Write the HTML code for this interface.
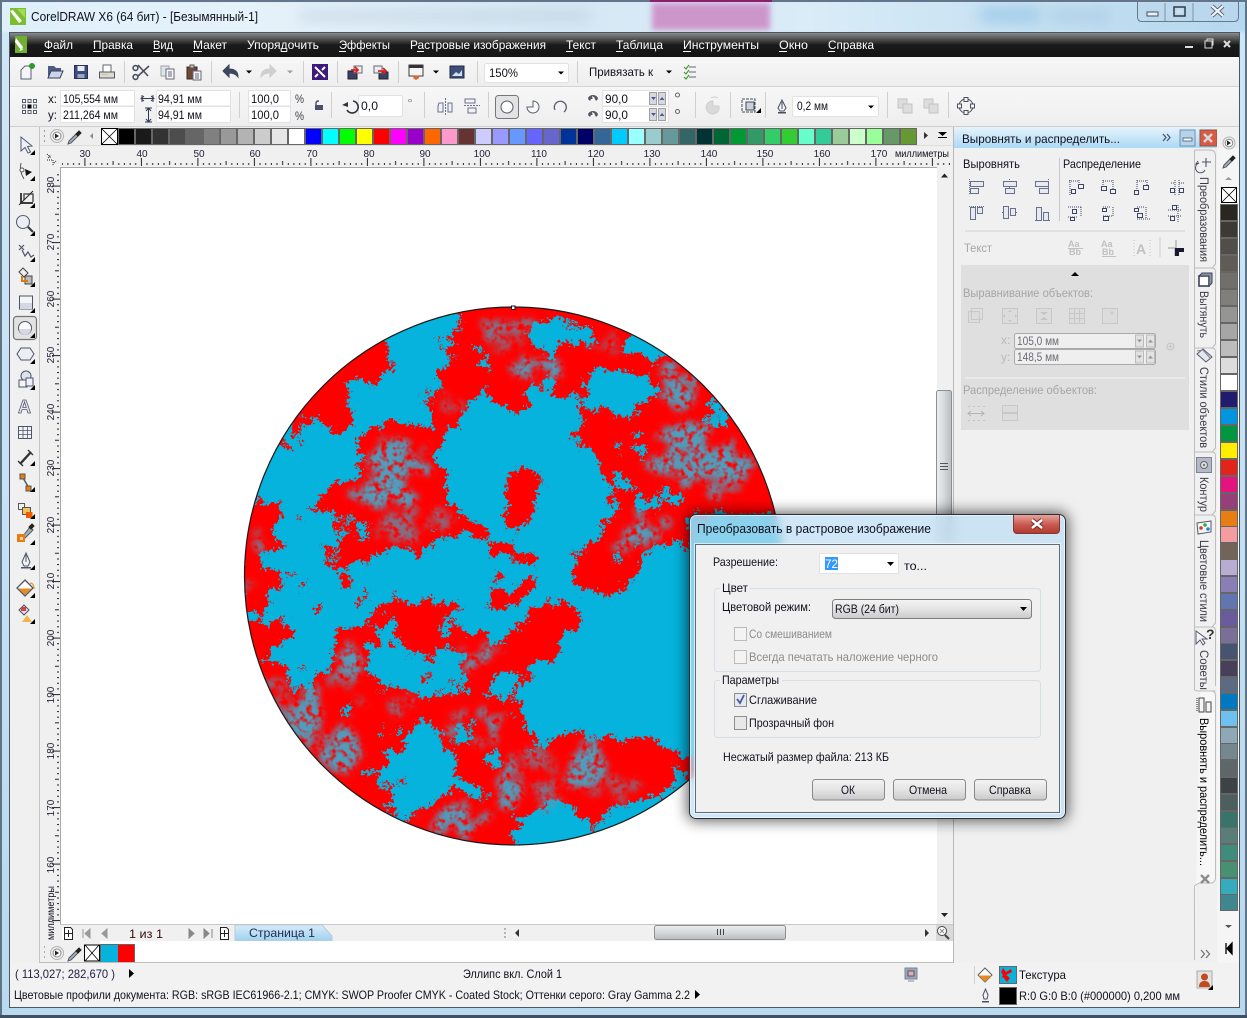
<!DOCTYPE html>
<html lang="ru"><head><meta charset="utf-8"><title>CorelDRAW X6</title>
<style>
html,body{margin:0;padding:0;background:#c5dff0}
body{position:relative;width:1247px;height:1018px;overflow:hidden;font-family:"Liberation Sans","Noto Sans CJK SC",sans-serif}
.a{position:absolute}
svg.l{position:absolute;left:0;top:0;width:1247px;height:1018px;overflow:hidden}
svg text{font-family:"Liberation Sans","Noto Sans CJK SC",sans-serif;font-size:12px;fill:#10101c}
svg .w{fill:#fff}
svg .g{fill:#a6a6a6}
svg .dg{fill:#8b8b8b}
svg .r{font-size:10px;text-anchor:middle;fill:#222238}
svg .tb{fill:#3c3c46}
</style></head><body>
<div class="a" style="left:0;top:0;width:1247px;height:1018px;background:linear-gradient(#cfe6f5,#c8e2f3 40%,#b9d9ee)"></div>
<div class="a" style="left:0;top:2px;width:1247px;height:30px;background:linear-gradient(90deg,#dff0fb,#e6f2fa 20%,#d6e8f5 45%,#d9ecf8 65%,#c3dff1 85%,#b5d8f0);filter:blur(1px)"></div>
<div class="a" style="left:300px;top:10px;width:290px;height:12px;background:#a9bccd;opacity:.32;filter:blur(6px)"></div>
<div class="a" style="left:652px;top:3px;width:118px;height:27px;background:#cd96cb;filter:blur(3px)"></div>
<div class="a" style="left:980px;top:8px;width:60px;height:14px;background:#8fc2e6;opacity:.7;filter:blur(7px)"></div>
<div class="a" style="left:1050px;top:10px;width:60px;height:12px;background:#a3c6de;opacity:.6;filter:blur(7px)"></div>
<div class="a" style="left:0;top:0;width:1247px;height:2px;background:#64748a"></div>
<div class="a" style="left:650px;top:0;width:122px;height:2px;background:#8c1f6b"></div>
<div class="a" style="left:0;top:0;width:2px;height:1018px;background:#5f7487"></div>
<div class="a" style="left:1245px;top:0;width:2px;height:1018px;background:#5f7487"></div>
<div class="a" style="left:0;top:1015px;width:1247px;height:3px;background:#3f5060"></div>
<div class="a" style="left:9px;top:32px;width:1231px;height:976px;background:#f0f0f0;border:1px solid #4a5866;box-sizing:border-box"></div>

<svg class="l" viewBox="0 0 1247 1018" xmlns="http://www.w3.org/2000/svg">
<defs>
<linearGradient id="gm" x1="0" y1="0" x2="0" y2="1"><stop offset="0" stop-color="#8a8a8a"/><stop offset=".5" stop-color="#1a1a1a"/><stop offset="1" stop-color="#151515"/></linearGradient>
<linearGradient id="gt" x1="0" y1="0" x2="0" y2="1"><stop offset="0" stop-color="#f7f7f7"/><stop offset="1" stop-color="#eeeeee"/></linearGradient>
<linearGradient id="gb" x1="0" y1="0" x2="0" y2="1"><stop offset="0" stop-color="#eceff1"/><stop offset=".5" stop-color="#d6d9db"/><stop offset="1" stop-color="#b9bcbe"/></linearGradient>
<linearGradient id="gh" x1="0" y1="0" x2="0" y2="1"><stop offset="0" stop-color="#e6f3fb"/><stop offset="1" stop-color="#acd9f5"/></linearGradient>
<linearGradient id="gv" x1="0" y1="0" x2="1" y2="0"><stop offset="0" stop-color="#eceff1"/><stop offset=".5" stop-color="#d6d9db"/><stop offset="1" stop-color="#b9bcbe"/></linearGradient>
<linearGradient id="gtab" x1="0" y1="0" x2="0" y2="1"><stop offset="0" stop-color="#d8ecfa"/><stop offset="1" stop-color="#9fd0f0"/></linearGradient>
<pattern id="hr" x="84.4" y="145" width="56.5" height="22" patternUnits="userSpaceOnUse">
<rect x="0" y="13" width="1" height="8" fill="#222"/><rect x="5.6" y="18" width="1" height="2" fill="#222"/><rect x="11.3" y="18" width="1" height="2" fill="#222"/><rect x="17" y="18" width="1" height="2" fill="#222"/><rect x="22.6" y="18" width="1" height="2" fill="#222"/><rect x="28.2" y="16" width="1" height="4" fill="#222"/><rect x="33.9" y="18" width="1" height="2" fill="#222"/><rect x="39.5" y="18" width="1" height="2" fill="#222"/><rect x="45.2" y="18" width="1" height="2" fill="#222"/><rect x="50.8" y="18" width="1" height="2" fill="#222"/></pattern>
<pattern id="vr" x="40" y="185.6" width="20" height="56.5" patternUnits="userSpaceOnUse">
<rect x="12" y="0" width="8" height="1" fill="#222"/><rect x="17" y="5.6" width="2" height="1" fill="#222"/><rect x="17" y="11.3" width="2" height="1" fill="#222"/><rect x="17" y="17" width="2" height="1" fill="#222"/><rect x="17" y="22.6" width="2" height="1" fill="#222"/><rect x="15" y="28.2" width="4" height="1" fill="#222"/><rect x="17" y="33.9" width="2" height="1" fill="#222"/><rect x="17" y="39.5" width="2" height="1" fill="#222"/><rect x="17" y="45.2" width="2" height="1" fill="#222"/><rect x="17" y="50.8" width="2" height="1" fill="#222"/></pattern>
<clipPath id="c"><circle cx="513.5" cy="576" r="269"/></clipPath>
<filter id="rough" x="-5%" y="-5%" width="110%" height="110%" color-interpolation-filters="sRGB">
<feTurbulence type="fractalNoise" baseFrequency=".07" numOctaves="3" seed="7" result="n"/>
<feColorMatrix in="n" type="matrix" values="1 0 0 0 0 0 1 0 0 0 0 0 1 0 0 0 0 0 0 1" result="n1"/>
<feDisplacementMap in="SourceGraphic" in2="n1" scale="24" xChannelSelector="R" yChannelSelector="G" result="d1"/>
<feTurbulence type="fractalNoise" baseFrequency=".28" numOctaves="2" seed="11" result="m"/>
<feColorMatrix in="m" type="matrix" values="1 0 0 0 0 0 1 0 0 0 0 0 1 0 0 0 0 0 0 1" result="m1"/>
<feDisplacementMap in="d1" in2="m1" scale="13" xChannelSelector="R" yChannelSelector="G"/>
</filter>
<filter id="mist" x="-5%" y="-5%" width="110%" height="110%" color-interpolation-filters="sRGB">
<feTurbulence type="fractalNoise" baseFrequency=".05" numOctaves="3" seed="21" result="w"/>
<feColorMatrix in="w" type="matrix" values="1 0 0 0 0 0 1 0 0 0 0 0 1 0 0 0 0 0 0 1" result="w1"/>
<feDisplacementMap in="SourceGraphic" in2="w1" scale="46" xChannelSelector="R" yChannelSelector="G" result="s"/>
<feGaussianBlur in="s" stdDeviation="3.500" result="b"/>
<feTurbulence type="fractalNoise" baseFrequency=".16" numOctaves="2" seed="3" result="t"/>
<feColorMatrix in="t" type="matrix" values="0 0 0 0 0 0 0 0 0 0 0 0 0 0 0 3.400 0 0 0 -.85" result="m"/>
<feComposite in="b" in2="m" operator="in"/></filter>
<path id="tri" d="M-3-1.5H3L0 1.5Z" fill="#000"/>
<path id="ct" d="M5 0V-5L0 0Z" fill="#000"/>
</defs>

<!-- menu -->
<rect x="10" y="33" width="1229" height="24" fill="url(#gm)"/>
<rect x="10" y="57" width="1229" height="29" fill="url(#gt)"/>
<rect x="10" y="86" width="1229" height="1" fill="#d4d4d4"/>
<rect x="10" y="87" width="1229" height="39" fill="url(#gt)"/>
<rect x="10" y="126" width="1229" height="1" fill="#cfcfcf"/>
<g>
<path d="M15 36h12v17H15z" fill="#6fae2e"/><path d="M16 38l7 9-2 3-6-8z" fill="#fff"/><path d="M19 51l4-1-1-3z" fill="#dfd"/>
</g>
<text class="w" x="44" y="49" textLength="29" lengthAdjust="spacingAndGlyphs">Файл</text>
<text class="w" x="93" y="49" textLength="40" lengthAdjust="spacingAndGlyphs">Правка</text>
<text class="w" x="153" y="49" textLength="20" lengthAdjust="spacingAndGlyphs">Вид</text>
<text class="w" x="193" y="49" textLength="34" lengthAdjust="spacingAndGlyphs">Макет</text>
<text class="w" x="247" y="49" textLength="72" lengthAdjust="spacingAndGlyphs">Упорядочить</text>
<text class="w" x="339" y="49" textLength="51" lengthAdjust="spacingAndGlyphs">Эффекты</text>
<text class="w" x="410" y="49" textLength="136" lengthAdjust="spacingAndGlyphs">Растровые изображения</text>
<text class="w" x="566" y="49" textLength="30" lengthAdjust="spacingAndGlyphs">Текст</text>
<text class="w" x="616" y="49" textLength="47" lengthAdjust="spacingAndGlyphs">Таблица</text>
<text class="w" x="683" y="49" textLength="76" lengthAdjust="spacingAndGlyphs">Инструменты</text>
<text class="w" x="779" y="49" textLength="29" lengthAdjust="spacingAndGlyphs">Окно</text>
<text class="w" x="828" y="49" textLength="46" lengthAdjust="spacingAndGlyphs">Справка</text>
<g fill="#fff"><rect x="44" y="51" width="8" height="1"/><rect x="93" y="51" width="8" height="1"/><rect x="153" y="51" width="7" height="1"/><rect x="193" y="51" width="9" height="1"/><rect x="281" y="51" width="6" height="1"/><rect x="339" y="51" width="7" height="1"/><rect x="417" y="51" width="7" height="1"/><rect x="566" y="51" width="7" height="1"/><rect x="616" y="51" width="7" height="1"/><rect x="683" y="51" width="8" height="1"/><rect x="779" y="51" width="8" height="1"/><rect x="828" y="51" width="7" height="1"/></g>
<g fill="#ddd"><rect x="1185" y="46" width="8" height="2"/><path d="M1205 41h7v7h-7zM1207 39h6v6h-1v-4h-5z" fill="none" stroke="#ddd"/><path d="M1224 41l6 6m0-6l-6 6" stroke="#ddd" stroke-width="2"/></g>
<!-- title -->
<rect x="10" y="8" width="16" height="17" fill="#7cbf2e"/><path d="M13 10l9 11-3 2-9-12z" fill="#fff"/><path d="M17 9l8 0 0 9z" fill="#a2d95b"/>
<text x="31" y="21" textLength="227" lengthAdjust="spacingAndGlyphs" style="font-size:12.5px">CorelDRAW X6 (64 бит) - [Безымянный-1]</text>
<!-- window buttons -->
<path d="M1137.500 2V17q0 4.500 4.500 4.500H1234q4.500 0 4.500-4.500V2" fill="#bcd5e8" fill-opacity=".45" stroke="#66788c"/>
<path d="M1165 3V21M1193 3V21" stroke="#7f92a4"/>
<rect x="1147" y="12" width="11" height="4" fill="#e9f1f7" stroke="#45505c"/>
<rect x="1174" y="7" width="11" height="9" fill="none" stroke="#2f3a48" stroke-width="1.500"/><rect x="1176.500" y="9.500" width="6" height="4" fill="#cfe0ee"/>
<path d="M1212 6l11 10m0-10l-11 10" stroke="#4b5968" stroke-width="4"/><path d="M1212 6l11 10m0-10l-11 10" stroke="#f2f6fa" stroke-width="2.200"/>

<!-- toolbar 1 -->
<g stroke="#cfcfcf"><path d="M124.500 61V83M211.500 61V83M303.500 61V83M337.500 61V83M398.500 61V83M477.500 61V83M577.500 61V83"/></g>
<g transform="translate(27,72)"><path d="M-6-2L-2-6H4V7H-6Z" fill="#f4f5f8" stroke="#5a6070"/><circle cx="5" cy="-6" r="3" fill="#2c9a2c"/></g>
<g transform="translate(55,72)"><path d="M-7-6H-1L1-4H6V5H-7Z" fill="#4c5a86"/><path d="M-7 6L-4-1H8L5 6Z" fill="#ccd4e8" stroke="#36405e"/></g>
<g transform="translate(81,72)"><rect x="-6.500" y="-6.500" width="13" height="13" fill="#3d4a7e" stroke="#2a3252"/><rect x="-3.500" y="-6" width="7" height="5" fill="#e8ecf6"/><rect x="-3.500" y="2" width="7" height="4" fill="#9aa4c4"/></g>
<g transform="translate(107,72)"><rect x="-4" y="-7" width="8" height="7" fill="#fff" stroke="#667"/><rect x="-7.500" y="0" width="15" height="6" fill="#dcdad0" stroke="#556"/><rect x="-5" y="2" width="6" height="1" fill="#cc8"/></g>
<g transform="translate(141,72)" fill="none" stroke="#4a4f5e" stroke-width="1.600"><path d="M-3-7L7 4M8-6L-3 4"/><circle cx="-5.500" cy="-4" r="2.400"/><circle cx="-5.500" cy="5" r="2.400"/></g>
<g transform="translate(168,72)"><rect x="-7" y="-6" width="8" height="10" fill="#dbe6ea" stroke="#9ca4aa"/><rect x="-2" y="-3" width="8" height="10" fill="#f6f8fa" stroke="#667"/><path d="M0 0h4M0 2h4M0 4h4" stroke="#667"/></g>
<g transform="translate(194,72)"><rect x="-7" y="-5" width="10" height="12" fill="#6e4a35" stroke="#3c2a20"/><rect x="-4" y="-7" width="4" height="3" fill="#c8c8c8" stroke="#555"/><rect x="-1" y="-1" width="8" height="9" fill="#f3f5f8" stroke="#667"/><path d="M1 2h4M1 4h4M1 6h4" stroke="#667"/></g>
<path d="M223 71l6-6v4c6 0 9 3 9 8-2-3-5-4-9-4v4z" fill="#3e465e" stroke="#3e465e"/>
<use href="#tri" x="249" y="72"/>
<path d="M276 71l-6-6v4c-6 0-9 3-9 8 2-3 5-4 9-4v4z" fill="#cfcfcf" stroke="#cfcfcf"/>
<use href="#tri" x="290" y="72" opacity=".35"/>
<rect x="312" y="64" width="16" height="16" fill="#3c1a7c"/><path d="M315 67l10 10M325 67l-3 3M315 77l3-3" stroke="#fff" stroke-width="2"/>
<g transform="translate(355,72)"><rect x="-7" y="-1" width="9" height="8" fill="#39406a" stroke="#222"/><rect x="-1" y="-6" width="8" height="7" fill="#eee" stroke="#667"/><path d="M-4 -2h7M0-5l3 3-3 3" stroke="#d22" stroke-width="1.800" fill="none"/></g>
<g transform="translate(381,72)"><rect x="-2" y="0" width="9" height="7" fill="#39406a" stroke="#222"/><path d="M-7-6h8v7h-8z" fill="#eee" stroke="#667"/><path d="M-3-1h8M2-4l3 3-3 3" stroke="#d22" stroke-width="1.800" fill="none"/></g>
<g transform="translate(416,72)"><rect x="-7" y="-7" width="14" height="11" fill="#f4f4f4" stroke="#3a3a44"/><rect x="-7" y="-7" width="14" height="3" fill="#333"/><path d="M-3 6q3-4 3-2q3-2 3 2l-3 2z" fill="#e8602a"/></g>
<use href="#tri" x="436" y="72"/>
<g transform="translate(457,72)"><rect x="-7" y="-6" width="14" height="12" fill="#3d4f78" stroke="#222a44"/><path d="M-5 4l4-4 3 2 3-4v6z" fill="#cfe0ee"/></g>
<rect x="484.500" y="63.500" width="84" height="19" rx="2" fill="#fff" stroke="#e2e2e2"/>
<text x="489" y="77" textLength="29" lengthAdjust="spacingAndGlyphs">150%</text>
<use href="#tri" x="561" y="73"/>
<text x="589" y="76" textLength="64" lengthAdjust="spacingAndGlyphs">Привязать к</text>
<use href="#tri" x="669" y="72"/>
<g transform="translate(690,72)" fill="none"><path d="M-1-5H6M-1 0H6M-1 5H6" stroke="#667"/><path d="M-6-5l2 2 3-4M-6 0l2 2 3-4M-6 5l2 2 3-4" stroke="#4a9a3a" stroke-width="1.200"/></g>

<!-- toolbar 2 -->
<g fill="#fff" stroke="#555a6a"><rect x="22.500" y="99.500" width="3" height="3"/><rect x="28" y="99.500" width="3" height="3"/><rect x="33.500" y="99.500" width="3" height="3"/><rect x="22.500" y="105" width="3" height="3"/><rect x="33.500" y="105" width="3" height="3"/><rect x="22.500" y="110.500" width="3" height="3"/><rect x="28" y="110.500" width="3" height="3"/><rect x="33.500" y="110.500" width="3" height="3"/></g><rect x="27.500" y="104.500" width="4" height="4" fill="#000"/>
<text x="48" y="103" textLength="9" lengthAdjust="spacingAndGlyphs">x:</text><text x="48" y="119" textLength="9" lengthAdjust="spacingAndGlyphs">y:</text>
<g fill="#fff" stroke="#e2e2e2"><rect x="60.500" y="90.500" width="74" height="15.500"/><rect x="60.500" y="106.500" width="74" height="16"/><rect x="156.500" y="90.500" width="74" height="15.500"/><rect x="156.500" y="106.500" width="74" height="16"/><rect x="248.500" y="90.500" width="42" height="15.500"/><rect x="248.500" y="106.500" width="42" height="16"/><rect x="358.500" y="95.500" width="44" height="21" rx="2"/><rect x="792.500" y="96.500" width="86" height="20" rx="2"/></g>
<text x="63" y="103" textLength="55" lengthAdjust="spacingAndGlyphs">105,554 мм</text><text x="63" y="119" textLength="55" lengthAdjust="spacingAndGlyphs">211,264 мм</text>
<path d="M142 98.500h11M144 96l-3 2.500 3 2.500M151 96l3 2.500-3 2.500M142 95v7M153 95v7" stroke="#333a50" fill="none"/>
<path d="M148.500 109v12M146 111l2.500-3 2.500 3M146 119l2.500 3 2.500-3M145 108h7M145 122h7" stroke="#333a50" fill="none"/>
<text x="158" y="103" textLength="44" lengthAdjust="spacingAndGlyphs">94,91 мм</text><text x="158" y="119" textLength="44" lengthAdjust="spacingAndGlyphs">94,91 мм</text>
<text x="251" y="103" textLength="28" lengthAdjust="spacingAndGlyphs">100,0</text><text x="251" y="119" textLength="28" lengthAdjust="spacingAndGlyphs">100,0</text>
<text x="295" y="103" class="tb" textLength="9" lengthAdjust="spacingAndGlyphs">%</text><text x="295" y="120" class="tb" textLength="9" lengthAdjust="spacingAndGlyphs">%</text>
<g transform="translate(319,106)"><rect x="-4" y="-1" width="8" height="5" fill="#4a5070"/><path d="M-3-1V-3Q-3-5 0-5" fill="none" stroke="#4a5070" stroke-width="1.400"/></g>
<g stroke="#cfcfcf"><path d="M239.500 92V118M331.500 92V118M424.500 92V118M488.500 92V118M695.500 92V118M730.500 92V118M765.500 92V118M887.500 92V118M948.500 92V118"/></g>
<path d="M353 101a6 6 0 1 1-6 9" fill="none" stroke="#2d3340" stroke-width="1.600"/><path d="M342 105l6-3v5z" fill="#2d3340"/>
<text x="361" y="110" textLength="17" lengthAdjust="spacingAndGlyphs">0,0</text>
<text x="407" y="107" textLength="6" lengthAdjust="spacingAndGlyphs" class="dg">°</text>
<g fill="none" stroke="#6a7090"><path d="M445.500 98V116" stroke-dasharray="2 1"/><path d="M439 103h4v9h-5v-6zM448 103h4v9h-4z"/></g>
<g fill="none" stroke="#6a7090"><path d="M464 105.500H480" stroke-dasharray="2 1"/><path d="M465 99h10v4h-10zM468 108h8v5h-8z"/></g>
<rect x="495.500" y="95.500" width="23" height="23" rx="3" fill="#e3e3e3" stroke="#74767c"/><circle cx="507" cy="107" r="6" fill="#fff" stroke="#555b70"/>
<path d="M534 102a6 6 0 1 1-6 6h6z" transform="translate(-1,-1)" fill="#fafafa" stroke="#5a6070"/>
<path d="M555 110a6 6 0 1 1 9 2" fill="none" stroke="#5a6070" stroke-width="1.300"/>
<g fill="#525866"><path d="M588 99a5 4 0 0 1 10 0l-2 2-1-2h-4l-1 2z"/><path d="M592 96l1 5 2-3z" fill="#fff"/><path d="M588 115a5 4 0 0 1 10 0l-2 2-1-2h-4l-1 2z"/><path d="M592 112l1 5 2-3z" fill="#fff"/></g>
<g fill="#fff" stroke="#e2e2e2"><rect x="602.500" y="90.500" width="66" height="15.500"/><rect x="602.500" y="106.500" width="66" height="16"/></g>
<text x="605" y="103" textLength="23" lengthAdjust="spacingAndGlyphs">90,0</text><text x="605" y="119" textLength="23" lengthAdjust="spacingAndGlyphs">90,0</text>
<g fill="#d6d9db" stroke="#9ea0a6"><rect x="649.500" y="92.500" width="7" height="12"/><rect x="658.500" y="92.500" width="7" height="12"/><rect x="649.500" y="108.500" width="7" height="12"/><rect x="658.500" y="108.500" width="7" height="12"/></g>
<g fill="#4a5a9a"><path d="M651 97h5l-2.500 3zM651 113h5l-2.500 3zM659.500 100h5l-2.500-3zM659.500 116h5l-2.500-3z"/></g>
<circle cx="677.500" cy="95" r="2" fill="none" stroke="#666"/><circle cx="677.500" cy="111.500" r="2" fill="none" stroke="#666"/>
<path d="M713 101a6.500 6.500 0 1 0 6 5h-6z" fill="#d9d9d9" stroke="#cfcfcf"/><path d="M711 98a7 7 0 0 1 7 0" stroke="#cfcfcf" fill="none"/>
<g transform="translate(749,106)"><path d="M-8-7H6V7" fill="none"/><rect x="-7" y="-7" width="13" height="13" fill="none" stroke="#444a58" stroke-dasharray="3 1"/><rect x="-3" y="-4" width="8" height="8" fill="#cbd0dc" stroke="#444a58"/></g>
<path d="M761 113v-5l-5 5z" fill="#000"/>
<g transform="translate(782,106)"><path d="M-4 2L0-6 4 2 2 5H-2Z" fill="#f2f3f6" stroke="#4a5060"/><path d="M0-4V3" stroke="#4a5060"/><rect x="-4" y="6" width="8" height="1.500" fill="#4a5060"/></g>
<text x="797" y="110" textLength="31" lengthAdjust="spacingAndGlyphs">0,2 мм</text>
<use href="#tri" x="871" y="107"/>
<g fill="#ddd" stroke="#c4c4c4"><rect x="898" y="99" width="9" height="9"/><rect x="903" y="104" width="9" height="9"/><rect x="924" y="99" width="9" height="9"/><rect x="929" y="104" width="9" height="9"/></g>
<g><circle cx="966" cy="106" r="7" fill="none" stroke="#4a5060"/><g fill="#f5f5f5" stroke="#4a5060"><rect x="964" y="97.500" width="4" height="4"/><rect x="964" y="110.500" width="4" height="4"/><rect x="957.500" y="104" width="4" height="4"/><rect x="970.500" y="104" width="4" height="4"/></g></g>

<!-- palette row -->
<rect x="40" y="127" width="914" height="18" fill="#eeeeee"/>
<path d="M44 131h1M44 136h1M44 141h1" stroke="#999" stroke-width="2"/>
<circle cx="57" cy="136" r="6.500" fill="#eee" stroke="#b3b3b3"/><circle cx="57" cy="136" r="4" fill="#fafafa" stroke="#888"/><path d="M55 133.500l4 2.500-4 2.500z" fill="#222"/>
<path d="M69 141l7-7 2 2-7 7-3 1z" fill="#9db5b0" stroke="#556"/><path d="M76 134l3-3 2 2-3 3z" fill="#222" stroke="#222"/>
<path d="M93 133v6l-3-3z" fill="#888"/>
<rect x="101.500" y="128.500" width="16" height="16" fill="#fff" stroke="#000"/><path d="M102 129l15 15M117 129l-15 15" stroke="#000" stroke-width=".8"/>
<g stroke="#666" stroke-width="1">
<rect x="118.500" y="128.500" width="16" height="16" fill="#000"/><rect x="135.500" y="128.500" width="16" height="16" fill="#1a1a1a"/><rect x="152.500" y="128.500" width="16" height="16" fill="#333"/><rect x="169.500" y="128.500" width="16" height="16" fill="#4d4d4d"/><rect x="186.500" y="128.500" width="16" height="16" fill="#666"/><rect x="203.500" y="128.500" width="16" height="16" fill="#808080"/><rect x="220.500" y="128.500" width="16" height="16" fill="#999"/><rect x="237.500" y="128.500" width="16" height="16" fill="#b3b3b3"/><rect x="254.500" y="128.500" width="16" height="16" fill="#ccc"/><rect x="271.500" y="128.500" width="16" height="16" fill="#e6e6e6"/><rect x="288.500" y="128.500" width="16" height="16" fill="#fff"/><rect x="305.500" y="128.500" width="16" height="16" fill="#00f"/><rect x="322.500" y="128.500" width="16" height="16" fill="#0ff"/><rect x="339.500" y="128.500" width="16" height="16" fill="#0f0"/><rect x="356.500" y="128.500" width="16" height="16" fill="#ff0"/><rect x="373.500" y="128.500" width="16" height="16" fill="#f00"/><rect x="390.500" y="128.500" width="16" height="16" fill="#f0f"/><rect x="407.500" y="128.500" width="16" height="16" fill="#90c"/><rect x="424.500" y="128.500" width="16" height="16" fill="#f60"/><rect x="441.500" y="128.500" width="16" height="16" fill="#f9c"/><rect x="458.500" y="128.500" width="16" height="16" fill="#633"/><rect x="475.500" y="128.500" width="16" height="16" fill="#ccf"/><rect x="492.500" y="128.500" width="16" height="16" fill="#99f"/><rect x="509.500" y="128.500" width="16" height="16" fill="#69f"/><rect x="526.500" y="128.500" width="16" height="16" fill="#66f"/><rect x="543.500" y="128.500" width="16" height="16" fill="#66c"/><rect x="560.500" y="128.500" width="16" height="16" fill="#039"/><rect x="577.500" y="128.500" width="16" height="16" fill="#006"/><rect x="594.500" y="128.500" width="16" height="16" fill="#369"/><rect x="611.500" y="128.500" width="16" height="16" fill="#0cf"/><rect x="628.500" y="128.500" width="16" height="16" fill="#9ff"/><rect x="645.500" y="128.500" width="16" height="16" fill="#9cc"/><rect x="662.500" y="128.500" width="16" height="16" fill="#699"/><rect x="679.500" y="128.500" width="16" height="16" fill="#366"/><rect x="696.500" y="128.500" width="16" height="16" fill="#033"/><rect x="713.500" y="128.500" width="16" height="16" fill="#063"/><rect x="730.500" y="128.500" width="16" height="16" fill="#093"/><rect x="747.500" y="128.500" width="16" height="16" fill="#396"/><rect x="764.500" y="128.500" width="16" height="16" fill="#3c6"/><rect x="781.500" y="128.500" width="16" height="16" fill="#3c3"/><rect x="798.500" y="128.500" width="16" height="16" fill="#6fc"/><rect x="815.500" y="128.500" width="16" height="16" fill="#3c9"/><rect x="832.500" y="128.500" width="16" height="16" fill="#9c9"/><rect x="849.500" y="128.500" width="16" height="16" fill="#cfc"/><rect x="866.500" y="128.500" width="16" height="16" fill="#9f9"/><rect x="883.500" y="128.500" width="16" height="16" fill="#696"/><rect x="900.500" y="128.500" width="16" height="16" fill="#693"/>
</g>
<path d="M924 132v7l4-3.500z" fill="#333"/><path d="M938 132h9l-4.500 4z M938 137h9v1h-9z" fill="#000"/>

<!-- rulers -->
<rect x="40" y="145" width="914" height="22" fill="#f0f0f0"/>
<rect x="40" y="167" width="20" height="758" fill="#f0f0f0"/>
<rect x="62" y="145" width="888" height="22" fill="url(#hr)"/>
<rect x="40" y="170" width="20" height="755" fill="url(#vr)"/>
<path d="M47 154l4 4m-3 0l3-3M54 163l2-2M47 160h6v6" stroke="#222" fill="none" stroke-dasharray="1 1"/>
<text class="r" x="85" y="157">30</text><text class="r" x="142" y="157">40</text><text class="r" x="199" y="157">50</text><text class="r" x="255" y="157">60</text><text class="r" x="312" y="157">70</text><text class="r" x="369" y="157">80</text><text class="r" x="425" y="157">90</text><text class="r" x="482" y="157">100</text><text class="r" x="539" y="157">110</text><text class="r" x="596" y="157">120</text><text class="r" x="652" y="157">130</text><text class="r" x="709" y="157">140</text><text class="r" x="765" y="157">150</text><text class="r" x="822" y="157">160</text><text class="r" x="879" y="157">170</text>
<text x="895" y="157" textLength="54" lengthAdjust="spacingAndGlyphs" style="font-size:10px">миллиметры</text>
<g class="v">
<text class="r" transform="translate(54,185) rotate(-90)">280</text><text class="r" transform="translate(54,242) rotate(-90)">270</text><text class="r" transform="translate(54,299) rotate(-90)">260</text><text class="r" transform="translate(54,355) rotate(-90)">250</text><text class="r" transform="translate(54,412) rotate(-90)">240</text><text class="r" transform="translate(54,468) rotate(-90)">230</text><text class="r" transform="translate(54,525) rotate(-90)">220</text><text class="r" transform="translate(54,581) rotate(-90)">210</text><text class="r" transform="translate(54,638) rotate(-90)">200</text><text class="r" transform="translate(54,695) rotate(-90)">190</text><text class="r" transform="translate(54,751) rotate(-90)">180</text><text class="r" transform="translate(54,808) rotate(-90)">170</text><text class="r" transform="translate(54,865) rotate(-90)">160</text></g>
<text transform="translate(54,940) rotate(-90)" textLength="54" lengthAdjust="spacingAndGlyphs" style="font-size:10px">миллиметры</text>
<rect x="39" y="127" width="1" height="836" fill="#c4c4c4"/>
<rect x="40" y="145" width="914" height="1" fill="#dedede"/>

<!-- canvas -->
<rect x="60" y="167" width="877" height="758" fill="#fff"/>
<rect x="60" y="167" width="877" height="1" fill="#a8a8a8"/>
<rect x="60" y="167" width="1" height="758" fill="#a8a8a8"/>

<g clip-path="url(#c)">
<rect x="240" y="300" width="550" height="552" fill="#05b3dc"/>
<g filter="url(#rough)">
<g fill="#ff0000">
<path d="M458 296L630 296 627 334 625 348 632 356 642 354 660 362 668 356 720 372 810 500 775 514 700 514 690 520 690 545 660 545 640 550 637 575 620 590 582 592 570 580 575 553 590 547 603 527 617 513 612 490 600 467 578 443 580 423 583 407 578 395 560 395 553 383 527 387 530 407 513 413 493 397 487 383 470 403 453 433 433 423 437 410 427 396 441 387 436 370 456 358 441 349 437 337 457 330 460 316Z"/>
<path d="M393 417L413 427 425 418 455 420 470 403 453 433 433 457 450 473 447 497 457 510 487 523 487 537 433 533 433 543 420 553 400 550 377 553 367 563 350 563 327 567 337 553 340 533 353 523 340 520 333 507 310 510 323 500 327 487 350 482 360 467 357 437Z"/>
<path d="M387 336L388 370 373 383 353 383 347 393 350 423 353 428 343 433 327 427 317 415 303 427 293 433 285 426 340 340Z"/>
<path d="M255 498L283 507 273 523 277 540 290 547 263 553 260 563 277 573 280 575 270 597 260 613 250 610 238 612 238 498Z"/>
<path d="M238 625L257 623 283 617 297 643 283 640 267 650 267 667 290 663 290 690 303 690 323 677 333 667 340 630 380 613 397 593 403 603 433 597 453 607 457 627 487 633 500 643 513 630 530 640 530 665 525 680 513 703 517 717 530 737 537 750 560 733 590 740 610 738 650 735 668 745 690 760 705 770 705 860 238 860Z"/>
<path d="M505 480L517 470 533 470 537 492 537 513 527 523 507 530 503 512 512 500Z"/>
<path d="M488 543L517 543 517 553 490 553ZM510 556L530 553 530 566 512 567Z"/>
<path d="M490 592L515 590 520 582 535 576 537 590 520 600 505 610 490 605Z"/>
<path d="M518 622L535 606 555 600 570 605 582 612 575 630 560 640 556 660 532 665 520 650Z"/>
<path d="M340 573L352 573 353 582 343 588ZM318 547L330 550 332 558 322 556Z"/>
</g>
<g fill="#05b3dc">
<path d="M530 331L543 320 567 317 570 327 590 323 597 337 590 343 567 343 555 355 537 343Z"/>
<path d="M437 333L452 335 452 350 441 348Z"/>
<path d="M477 357L488 358 488 368 478 366Z"/>
<path d="M583 383L597 367 610 372 630 371 650 378 657 387 643 407 627 423 610 413 603 407 583 407Z"/>
<circle cx="713" cy="407" r="8"/><circle cx="721" cy="421" r="8"/>
<path d="M636 447L647 448 647 460 637 458ZM613 472L630 478 635 492 620 492Z"/>
<path d="M633 498L657 497 657 513 640 510ZM660 490L680 490 680 503 662 503Z"/>
<path d="M610 553L622 553 622 563 612 563Z"/>
<path d="M385 612L377 640 367 650 365 673 387 683 377 695 387 688 417 693 437 698 453 690 470 685 463 670 467 657 453 645 430 655 407 650 397 630Z"/>
<path d="M437 632L453 612 453 633Z"/>
<path d="M357 520L368 522 368 540 358 538Z"/>
<path d="M420 415L436 417 432 428 422 427Z"/>
<path d="M490 677L517 673 517 690 500 702 490 693Z"/>
<path d="M415 722L410 740 387 757 383 767 363 770 387 787 390 800 387 812 400 822 427 807 440 797 457 787 477 797 487 800 470 780 453 770 457 760 450 753 440 740 437 723Z"/>
<path d="M456 728L473 727 465 745 455 750ZM487 752L500 750 498 765 488 763Z"/>
<path d="M518 818L540 812 560 800 575 808 590 825 600 850 515 850Z"/>
<path d="M600 850L595 825 610 812 640 800 680 790 710 780 710 860Z"/>
<path d="M675 770L690 778 690 790 670 790Z"/>
<path d="M268 655L280 650 285 660 270 662Z"/>
<circle cx="302" cy="418" r="4"/><circle cx="348" cy="712" r="6"/><circle cx="380" cy="730" r="2.500"/><circle cx="397" cy="730" r="3"/><circle cx="460" cy="730" r="3"/><circle cx="512" cy="815" r="3"/><circle cx="635" cy="428" r="2.500"/><circle cx="617" cy="450" r="3"/><circle cx="478" cy="350" r="2.500"/><circle cx="490" cy="357" r="2.500"/>
</g>
<g fill="#ff0000">
<circle cx="283" cy="443" r="3"/><circle cx="301" cy="443" r="2"/><circle cx="302" cy="517" r="2"/><path d="M330 520L347 522 345 528 332 527Z"/><circle cx="290" cy="577" r="2.500"/><circle cx="303" cy="582" r="2.500"/><rect x="317" y="605" width="5" height="9"/><rect x="358" y="592" width="5" height="13"/><circle cx="497" cy="575" r="3"/><circle cx="493" cy="577" r="2"/><circle cx="390" cy="650" r="3"/><circle cx="402" cy="777" r="2.500"/><circle cx="430" cy="662" r="5"/><circle cx="428" cy="675" r="2"/><circle cx="438" cy="687" r="2"/><circle cx="447" cy="687" r="1.500"/><circle cx="460" cy="685" r="2"/><circle cx="538" cy="482" r="3"/><circle cx="544" cy="483" r="2"/><circle cx="574" cy="434" r="4"/><circle cx="297" cy="685" r="2"/><circle cx="300" cy="668" r="2"/>
</g>
</g>
<g fill="#4f9cbc" filter="url(#mist)">
<ellipse cx="395" cy="462" rx="24" ry="27"/><ellipse cx="385" cy="495" rx="32" ry="15"/><ellipse cx="400" cy="530" rx="20" ry="13" opacity=".7"/><ellipse cx="440" cy="517" rx="10" ry="9" opacity=".8"/><ellipse cx="453" cy="397" rx="6" ry="10" opacity=".6"/>
<ellipse cx="507" cy="333" rx="20" ry="12" opacity=".7"/><ellipse cx="490" cy="322" rx="8" ry="10" opacity=".7"/><ellipse cx="537" cy="368" rx="27" ry="9"/><ellipse cx="610" cy="345" rx="8" ry="6" opacity=".5"/>
<ellipse cx="680" cy="392" rx="16" ry="20"/><ellipse cx="687" cy="440" rx="26" ry="16"/><ellipse cx="717" cy="467" rx="46" ry="15"/><ellipse cx="670" cy="465" rx="14" ry="12"/><ellipse cx="725" cy="495" rx="18" ry="8" opacity=".8"/><ellipse cx="643" cy="533" rx="21" ry="14"/>
<ellipse cx="273" cy="687" rx="10" ry="10" opacity=".8"/><ellipse cx="310" cy="720" rx="15" ry="26"/><ellipse cx="288" cy="710" rx="12" ry="10" opacity=".8"/><ellipse cx="340" cy="753" rx="19" ry="22"/><ellipse cx="350" cy="657" rx="14" ry="16"/><ellipse cx="340" cy="680" rx="8" ry="8" opacity=".8"/><ellipse cx="360" cy="703" rx="7" ry="9" opacity=".8"/><ellipse cx="402" cy="705" rx="7" ry="7"/><ellipse cx="453" cy="717" rx="10" ry="9" opacity=".8"/><ellipse cx="493" cy="723" rx="10" ry="12"/><ellipse cx="477" cy="657" rx="9" ry="11"/><ellipse cx="497" cy="650" rx="6" ry="6" opacity=".7"/><ellipse cx="507" cy="783" rx="14" ry="24"/><ellipse cx="453" cy="820" rx="30" ry="15"/><ellipse cx="480" cy="743" rx="5" ry="5" opacity=".7"/><ellipse cx="249" cy="590" rx="5" ry="8" opacity=".7"/><ellipse cx="254" cy="541" rx="8" ry="7" opacity=".8"/>
<ellipse cx="590" cy="768" rx="20" ry="26"/><ellipse cx="550" cy="795" rx="14" ry="12" opacity=".7"/><ellipse cx="540" cy="762" rx="10" ry="10" opacity=".6"/><ellipse cx="625" cy="790" rx="10" ry="12" opacity=".6"/>
</g>
</g>
<circle cx="513.500" cy="576" r="269" fill="none" stroke="#1a1a1a" stroke-width="1.200"/>
<rect x="511.500" y="306" width="3.500" height="3.500" fill="#fff" stroke="#111"/>

<!-- scrollbars -->
<rect x="937" y="167" width="16" height="758" fill="#f0f0f0"/>
<path d="M941 177.500h7l-3.500-4z" fill="#222"/><path d="M941 913h7l-3.500 4z" fill="#222"/>
<rect x="936.500" y="390.500" width="15" height="150" rx="2" fill="url(#gv)" stroke="#8f8f8f"/>
<path d="M940 463.500h8M940 466.500h8M940 469.500h8" stroke="#555"/>
<rect x="60" y="925" width="893" height="16" fill="#f0f0f0"/>
<rect x="60" y="924" width="893" height="1" fill="#c8c8c8"/>
<rect x="62" y="928" width="11" height="12" fill="#fff"/><path d="M64.500 927.500h6l2 2v10h-8zM68.500 930v7M65 933.500h7" fill="#fff" stroke="#222"/>
<path d="M83 929v9M90 929v9l-5-4.500zM107 929v9l-5-4.500z" fill="#999" stroke="#999"/>
<text x="129" y="938" textLength="34" lengthAdjust="spacingAndGlyphs" style="fill:#3a0a0a">1 из 1</text>
<path d="M189 929v9l5-4.500zM204 929v9l5-4.500zM212 929v9" fill="#888" stroke="#888"/>
<path d="M220.500 927.500h6l2 2v10h-8zM224.500 930v7M221 933.500h7" fill="#fff" stroke="#222"/>
<path d="M235 941V925H322L332 936V941Z" fill="url(#gtab)" stroke="#b8ccd8"/>
<text x="249" y="937" textLength="66" lengthAdjust="spacingAndGlyphs" style="fill:#1e2a4c">Страница 1</text>
<path d="M505 928v10" stroke="#b5b5b5" stroke-dasharray="2 2" stroke-width="2"/>
<path d="M519 929v8l-4-4z" fill="#333"/>
<rect x="654.500" y="925.500" width="131" height="14" rx="2" fill="url(#gb)" stroke="#8f8f8f"/>
<path d="M717.500 929v6M720.500 929v6M723.500 929v6" stroke="#444"/>
<path d="M925 929v8l4-4z" fill="#333"/>
<rect x="936" y="925" width="17" height="16" fill="#d9d9d9"/><circle cx="942" cy="931" r="4.500" fill="#fff" stroke="#444"/><path d="M945 935l4 4" stroke="#444" stroke-width="2"/><path d="M940 929l4 4m0-4l-4 4" stroke="#888"/>

<!-- document palette -->
<rect x="40" y="941" width="913" height="22" fill="#fff"/>
<rect x="40" y="941" width="60" height="22" fill="#f0f0f0"/>
<path d="M44 947h1M44 952h1M44 957h1" stroke="#aaa" stroke-width="2"/>
<circle cx="57" cy="953" r="6.500" fill="#eee" stroke="#b3b3b3"/><circle cx="57" cy="953" r="4" fill="#fafafa" stroke="#888"/><path d="M55 950.500l4 2.500-4 2.500z" fill="#222"/>
<path d="M69 958l7-7 2 2-7 7-3 1z" fill="#9db5b0" stroke="#556"/><path d="M76 951l3-3 2 2-3 3z" fill="#222" stroke="#222"/>
<rect x="84.500" y="945" width="15" height="16" fill="#fff" stroke="#000"/><path d="M85 945l14 16M99 945l-14 16" stroke="#000" stroke-width=".8"/>
<rect x="101" y="944" width="17" height="18" fill="#05b3dc"/><rect x="118" y="944" width="16" height="18" fill="#f00"/>
<rect x="100.500" y="944.500" width="34" height="18" fill="none" stroke="#666"/>
<rect x="40" y="962" width="914" height="1" fill="#bfbfbf"/>
<rect x="953" y="127" width="1" height="836" fill="#b9b9b9"/>

<!-- status -->
<rect x="10" y="963" width="1229" height="44" fill="#f2f2f2"/>
<text x="15" y="978" textLength="100" lengthAdjust="spacingAndGlyphs" style="fill:#202048">( 113,027; 282,670 )</text>
<path d="M129 969v9l5-4.500z" fill="#000"/>
<text x="463" y="978" textLength="99" lengthAdjust="spacingAndGlyphs">Эллипс вкл. Слой 1</text>
<rect x="905" y="968" width="12" height="11" fill="#9ca6ba" stroke="#7a8498"/><rect x="908" y="971" width="6" height="5" fill="#e0b0b0" stroke="#556"/><path d="M908 981h6" stroke="#889"/>
<path d="M974.500 966V984" stroke="#d0d0d0"/>
<path d="M985 968l7 7-7 7-7-7z" fill="#fff" stroke="#5a5a68"/><path d="M978.500 975.500h13l-6.500 6.500z" fill="#e88a1e"/>
<rect x="999.500" y="966.500" width="17" height="17" fill="#05b3dc" stroke="#666"/><path d="M1003 968l3 4 5-3 1 3-6 3 4 3-3 4-4-5-2 2 2-4-2-3z" fill="#f00"/>
<text x="1019" y="979" textLength="47" lengthAdjust="spacingAndGlyphs">Текстура</text>
<path d="M983 995l2.500-6 2.500 6-1 4h-3z" fill="#f2f3f6" stroke="#4a5060"/><rect x="982" y="1001" width="7" height="1.500" fill="#4a5060"/>
<rect x="999.500" y="987.500" width="17" height="17" fill="#000" stroke="#666"/>
<text x="1019" y="1000" textLength="161" lengthAdjust="spacingAndGlyphs">R:0 G:0 B:0 (#000000)  0,200 мм</text>
<rect x="1197" y="971" width="15" height="17" fill="#e3e3e3" stroke="#aaa"/><circle cx="1204.500" cy="977" r="3.500" fill="#c24a1e"/><path d="M1199 987q0-6 5.500-6t5.500 6z" fill="#c24a1e"/>
<path d="M1213 985v5h-5z" fill="#000"/>
<text x="14" y="999" textLength="676" lengthAdjust="spacingAndGlyphs">Цветовые профили документа: RGB: sRGB IEC61966-2.1; CMYK: SWOP Proofer CMYK - Coated Stock; Оттенки серого: Gray Gamma 2.2</text>
<path d="M695 990v9l5-4.500z" fill="#000"/>
<path d="M1230 1003l3-3M1233 1003l3-3M1236 1003l1-1" stroke="#aaa" stroke-dasharray="1 1"/>

<!-- docker -->
<rect x="954" y="127" width="264" height="21" fill="url(#gh)"/>
<text x="962" y="143" textLength="158" lengthAdjust="spacingAndGlyphs">Выровнять и распределить...</text>
<path d="M1163 134l3 3.500-3 3.500M1167 134l3 3.500-3 3.500" fill="none" stroke="#4a5a78" stroke-width="1.300"/>
<rect x="1180" y="130" width="15" height="16" fill="#b6d3ea" stroke="#6a90b0"/><rect x="1183" y="138" width="9" height="3" fill="#f0f6fa" stroke="#4a5a78" stroke-width=".8"/>
<rect x="1200" y="130" width="17" height="16" fill="#d85c45" stroke="#905040"/><path d="M1204 134l8 8m0-8l-8 8" stroke="#d8d8d8" stroke-width="2.400"/>
<text x="963" y="168" textLength="57" lengthAdjust="spacingAndGlyphs">Выровнять</text>
<path d="M1059.500 158V221" stroke="#c8c8c8"/>
<text x="1063" y="168" textLength="78" lengthAdjust="spacingAndGlyphs">Распределение</text>
<!-- align icons -->
<g fill="#e8eaf0" stroke="#68708c">
<path d="M969.500 179V195" stroke-dasharray="1 1"/><rect x="970.500" y="181.500" width="13" height="5"/><rect x="970.500" y="188.500" width="8" height="5"/>
<path d="M1009.500 179V195" stroke-dasharray="1 1"/><rect x="1003.500" y="181.500" width="13" height="5"/><rect x="1005.500" y="188.500" width="9" height="5"/>
<path d="M1048.500 179V195" stroke-dasharray="1 1"/><rect x="1035.500" y="181.500" width="13" height="5"/><rect x="1039.500" y="188.500" width="9" height="5"/>
<path d="M969 206.500H984" stroke-dasharray="1 1"/><rect x="970.500" y="207.500" width="5" height="12"/><rect x="977.500" y="207.500" width="5" height="6"/>
<path d="M1002 212.500H1017" stroke-dasharray="1 1"/><rect x="1003.500" y="206.500" width="5" height="12"/><rect x="1010.500" y="208.500" width="5" height="7"/>
<path d="M1035 220.500H1050" stroke-dasharray="1 1"/><rect x="1036.500" y="207.500" width="5" height="13"/><rect x="1043.500" y="212.500" width="5" height="8"/>
</g>
<g fill="#f0f2f8" stroke="#3c4460">
<path d="M1069 181h10M1070 180v15M1079 180v5" fill="none" stroke-dasharray="1 1"/><rect x="1071.500" y="189.500" width="4" height="4"/><rect x="1078.500" y="184.500" width="5" height="4"/>
<path d="M1103 181h10M1103 180v6M1113 180v9" fill="none" stroke-dasharray="1 1"/><rect x="1101.500" y="186.500" width="5" height="4"/><rect x="1110.500" y="189.500" width="5" height="4"/>
<path d="M1137 181h10M1137 180v10M1147 180v10" fill="none" stroke-dasharray="1 1"/><rect x="1134.500" y="190.500" width="4" height="4"/><rect x="1143.500" y="185.500" width="5" height="4"/>
<path d="M1171 183h4M1179 183h5M1175 180v15M1179 180v15" fill="none" stroke-dasharray="1 1"/><rect x="1170.500" y="188.500" width="4" height="4"/><rect x="1179.500" y="188.500" width="4" height="4"/>
<path d="M1068 207h14M1068 217h10M1081 207v10" fill="none" stroke-dasharray="1 1"/><rect x="1072.500" y="209.500" width="4" height="4"/><rect x="1070.500" y="217.500" width="4" height="3"/>
<path d="M1103 207h7M1103 216h10M1113 207v10" fill="none" stroke-dasharray="1 1"/><rect x="1102.500" y="208.500" width="4" height="3"/><rect x="1103.500" y="216.500" width="5" height="4"/>
<path d="M1137 207h7M1137 219h14M1146 207v12" fill="none" stroke-dasharray="1 1"/><rect x="1134.500" y="208.500" width="4" height="3"/><rect x="1137.500" y="213.500" width="5" height="4"/>
<path d="M1168 210h14M1168 216h14M1178 205v17" fill="none" stroke-dasharray="1 1"/><rect x="1172.500" y="205.500" width="4" height="4"/><rect x="1170.500" y="216.500" width="4" height="4"/>
</g>
<path d="M965 231H1185" stroke="#d0d0d0"/>
<text class="g" x="964" y="252" textLength="28" lengthAdjust="spacingAndGlyphs">Текст</text>
<g><text x="1068" y="247" style="font-size:9px;font-weight:bold;fill:#c0c0c0">Aa</text><text x="1069" y="255" style="font-size:9px;font-weight:bold;fill:#c0c0c0">Bb</text><path d="M1068 248.500h15" stroke="#c0c0c0"/>
<text x="1101" y="247" style="font-size:9px;font-weight:bold;fill:#c0c0c0">Aa</text><text x="1102" y="255" style="font-size:9px;font-weight:bold;fill:#c0c0c0">Bb</text><path d="M1102 256.500h14" stroke="#c0c0c0"/>
<text x="1136" y="254" style="font-size:14px;font-weight:bold;fill:#c0c0c0">A</text><path d="M1134 240v16M1150 240v16" stroke="#c8c8c8" stroke-dasharray="1 2"/></g>
<path d="M1160 237V257" stroke="#d0d0d0"/>
<path d="M1168 248h7V256M1176 240V248" stroke="#999" fill="none"/><path d="M1175 248h9v4h-5v4h-4z" fill="#1a1a2e"/>
<rect x="961" y="265" width="228" height="165" fill="#dfdfdf"/>
<path d="M1071 276h8l-4-4z" fill="#000"/>
<text class="g" x="963" y="297" textLength="130" lengthAdjust="spacingAndGlyphs">Выравнивание объектов:</text>
<g fill="#dcdcdc" stroke="#c8c8c8"><rect x="968.500" y="311.500" width="11" height="11"/><rect x="971.500" y="308.500" width="11" height="11" fill="none"/><rect x="1002.500" y="308.500" width="15" height="15"/><rect x="1036.500" y="308.500" width="15" height="15"/><rect x="1069.500" y="308.500" width="15" height="15"/><rect x="1102.500" y="308.500" width="15" height="15"/></g>
<path d="M1069 313.500h15M1069 318.500h15M1074.500 309v15M1079.500 309v15M1110 313h4M1112 311v4" stroke="#c8c8c8"/>
<path d="M1008 312h4l-2-2zM1008 320h4l-2 2zM1005 314v4l-2-2zM1015 314v4l2-2zM1040 312h8l-4 3zM1040 320h8l-4-3z" fill="#c4c4c4"/>
<text class="g" x="1001" y="344" style="fill:#b9b9b9">x:</text><text class="g" x="1001" y="361" style="fill:#b9b9b9">y:</text>
<g fill="#efefef" stroke="#aaa"><rect x="1014.500" y="333.500" width="141" height="15" rx="2"/><rect x="1014.500" y="349.500" width="141" height="15" rx="2"/></g>
<g fill="#e2e2e2" stroke="#bbb"><rect x="1135.500" y="335" width="8" height="12"/><rect x="1146.500" y="335" width="8" height="12"/><rect x="1135.500" y="351" width="8" height="12"/><rect x="1146.500" y="351" width="8" height="12"/></g>
<path d="M1137 339.500h5l-2.500 3zM1137 355.500h5l-2.500 3zM1148 342.500h5l-2.500-3zM1148 358.500h5l-2.500-3z" fill="#999"/>
<text class="dg" x="1017" y="345" textLength="42" lengthAdjust="spacingAndGlyphs" style="fill:#6c6c74">105,0 мм</text><text class="dg" x="1017" y="361" textLength="42" lengthAdjust="spacingAndGlyphs" style="fill:#6c6c74">148,5 мм</text>
<circle cx="1170.500" cy="346.500" r="3.500" fill="none" stroke="#c4c4c4"/><path d="M1168.500 346.500h4M1170.500 344.500v4" stroke="#c4c4c4"/>
<path d="M965 378H1185" stroke="#f6f6f6"/>
<text class="g" x="963" y="394" textLength="134" lengthAdjust="spacingAndGlyphs">Распределение объектов:</text>
<path d="M968 406.500h2M973 406.500h2M978 406.500h2M983 406.500h2M968 420.500h2M973 420.500h2M978 420.500h2M983 420.500h2" stroke="#c4c4c4"/><path d="M968 413.500h16M971 411l-3 2.500 3 2.500M981 411l3 2.500-3 2.500" stroke="#b4b4b4" fill="none"/>
<rect x="1002.500" y="405.500" width="15" height="15" fill="#dcdcdc" stroke="#c8c8c8"/><path d="M1003 413h14" stroke="#b4b4b4"/>

<!-- tabs -->
<rect x="1194" y="148" width="22" height="815" fill="#f0f0f0"/>
<path d="M1194.500 150H1210Q1215.500 150 1215.500 156V264L1212 268H1194.500M1212 268Q1215.500 268 1215.500 272V344L1212 348H1194.500M1212 348Q1215.500 348 1215.500 352V448L1212 452H1194.500M1212 452Q1215.500 452 1215.500 456V511L1212 515H1194.500M1212 515Q1215.500 515 1215.500 519V623L1212 627H1194.500M1212 627Q1215.500 627 1215.500 631V686" fill="none" stroke="#bdbdbd"/>
<path d="M1194.500 150V690Q1194.500 690 1198 691H1215.500" fill="none" stroke="#bdbdbd"/>
<path d="M1200 691H1211Q1215.500 691 1215.500 696V877Q1215.500 883 1210 883H1199L1194.500 886V960" fill="#f7f7f7" stroke="#bdbdbd"/>
<text transform="translate(1200,177) rotate(90)" textLength="85" lengthAdjust="spacingAndGlyphs" class="tb">Преобразования</text>
<text transform="translate(1200,291) rotate(90)" textLength="47" lengthAdjust="spacingAndGlyphs" class="tb">Вытянуть</text>
<text transform="translate(1200,367) rotate(90)" textLength="81" lengthAdjust="spacingAndGlyphs" class="tb">Стили объектов</text>
<text transform="translate(1200,477) rotate(90)" textLength="35" lengthAdjust="spacingAndGlyphs" class="tb">Контур</text>
<text transform="translate(1200,540) rotate(90)" textLength="82" lengthAdjust="spacingAndGlyphs" class="tb">Цветовые стили</text>
<text transform="translate(1200,650) rotate(90)" textLength="40" lengthAdjust="spacingAndGlyphs" class="tb">Советы</text>
<text transform="translate(1200,718) rotate(90)" textLength="148" lengthAdjust="spacingAndGlyphs" style="fill:#000">Выровнять и распределить...</text>
<g transform="translate(1203,166)" fill="none" stroke="#4e5468"><path d="M-4-3a5 5 0 1 0 6 7"/><path d="M-4-3l-3 1 2-3" /><path d="M3-8v9M-1-4h9" stroke-width="1.100"/></g>
<g transform="translate(1204,280)"><rect x="-5" y="-4" width="10" height="10" fill="#fff" stroke="#3e4458" stroke-width="1.600"/><path d="M-5-4l3-3h10v10l-3 3V-4z" fill="#8c93a5" stroke="#3e4458"/></g>
<g transform="translate(1204,356)"><path d="M-7-2l6-5 9 8-6 5z" fill="#e4e7ee" stroke="#555a6e"/><path d="M-7-5l6-1 7 8" fill="none" stroke="#7d8398"/></g>
<g transform="translate(1204,465)"><rect x="-7.500" y="-7.500" width="15" height="15" fill="#b3b9c5" stroke="#7d8398"/><circle cy="0" r="3.500" fill="#ddd" stroke="#666"/><circle r="1" fill="#555"/></g>
<g transform="translate(1204,528)"><path d="M-7-5L7-7V4L-6 6Z" fill="#f5f5f8" stroke="#555a6e"/><circle cx="-3" cy="0" r="1.800" fill="#d33"/><circle cx="1" cy="-3" r="1.800" fill="#3a3"/><circle cx="4" cy="1" r="1.800" fill="#28c"/></g>
<g transform="translate(1204,637)"><path d="M-8-6V7L-4 3-1 8 1 6-2 2H3Z" fill="#f4f5f8" stroke="#555a6e"/><text x="2" y="2" style="font-size:14px;font-weight:bold;fill:#333">?</text></g>
<g transform="translate(1204,705)"><path d="M-7-7v14" stroke="#222" stroke-dasharray="1 1"/><rect x="-5" y="-7" width="5" height="14" fill="#f5f5f5" stroke="#444"/><rect x="2" y="-3" width="5" height="10" fill="#f5f5f5" stroke="#444"/></g>
<path d="M1201 875l8 8m0-8l-8 8" stroke="#8c8c8c" stroke-width="2.400"/>
<path d="M1201 950l3.500 4-3.500 4M1206 950l3.500 4-3.500 4" fill="none" stroke="#777" stroke-width="1.300"/>

<!-- right palette -->
<rect x="1217" y="148" width="22" height="815" fill="#f5f5f5"/>
<rect x="1217" y="127" width="22" height="21" fill="#f0f0f0"/>
<circle cx="1229" cy="143" r="6" fill="#eee" stroke="#b3b3b3"/><circle cx="1229" cy="143" r="3.800" fill="#fafafa" stroke="#888"/><path d="M1227 140.500l4 2.500-4 2.500z" fill="#222"/>
<path d="M1224 165l6-6 2 2-6 6-3 1z" fill="#9db5b0" stroke="#556"/><path d="M1230 159l3-3 2 2-3 3z" fill="#222" stroke="#222"/>
<path d="M1225 180h7l-3.500-3z" fill="#9a9a9a"/>
<rect x="1221.500" y="187.500" width="15" height="15" fill="#fff" stroke="#000"/><path d="M1222 188l14 14M1236 188l-14 14" stroke="#000" stroke-width=".8"/>
<g stroke="#666">
<rect x="1220.500" y="204.500" width="17" height="16" fill="#2a2620"/><rect x="1220.500" y="221.500" width="17" height="16" fill="#3d3934"/><rect x="1220.500" y="238.500" width="17" height="16" fill="#514e4a"/><rect x="1220.500" y="255.500" width="17" height="16" fill="#5f5c58"/><rect x="1220.500" y="272.500" width="17" height="16" fill="#716f6c"/><rect x="1220.500" y="289.500" width="17" height="16" fill="#807f7c"/><rect x="1220.500" y="306.500" width="17" height="16" fill="#959593"/><rect x="1220.500" y="323.500" width="17" height="16" fill="#a6a6a6"/><rect x="1220.500" y="340.500" width="17" height="16" fill="#bcbcbc"/><rect x="1220.500" y="357.500" width="17" height="16" fill="#dcdcdc"/><rect x="1220.500" y="374.500" width="17" height="16" fill="#fff"/><rect x="1220.500" y="391.500" width="17" height="16" fill="#211b6e"/><rect x="1220.500" y="408.500" width="17" height="16" fill="#0095e0"/><rect x="1220.500" y="425.500" width="17" height="16" fill="#009640"/><rect x="1220.500" y="442.500" width="17" height="16" fill="#ffee00"/><rect x="1220.500" y="459.500" width="17" height="16" fill="#e1251b"/><rect x="1220.500" y="476.500" width="17" height="16" fill="#e6127d"/><rect x="1220.500" y="493.500" width="17" height="16" fill="#96407a"/><rect x="1220.500" y="510.500" width="17" height="16" fill="#e87d14"/><rect x="1220.500" y="526.500" width="17" height="16" fill="#f49ca0"/><rect x="1220.500" y="543.500" width="17" height="16" fill="#726458"/><rect x="1220.500" y="559.500" width="17" height="16" fill="#b6acd4"/><rect x="1220.500" y="576.500" width="17" height="16" fill="#8a7fb5"/><rect x="1220.500" y="593.500" width="17" height="16" fill="#6175b0"/><rect x="1220.500" y="610.500" width="17" height="16" fill="#6a5a9e"/><rect x="1220.500" y="627.500" width="17" height="16" fill="#7a6f96"/><rect x="1220.500" y="643.500" width="17" height="16" fill="#465472"/><rect x="1220.500" y="660.500" width="17" height="16" fill="#474058"/><rect x="1220.500" y="677.500" width="17" height="16" fill="#5c6b82"/><rect x="1220.500" y="693.500" width="17" height="16" fill="#0079c1"/><rect x="1220.500" y="710.500" width="17" height="16" fill="#6ec1ef"/><rect x="1220.500" y="727.500" width="17" height="16" fill="#8fa8b5"/><rect x="1220.500" y="743.500" width="17" height="16" fill="#76888f"/><rect x="1220.500" y="760.500" width="17" height="16" fill="#5e666a"/><rect x="1220.500" y="777.500" width="17" height="16" fill="#3f4245"/><rect x="1220.500" y="794.500" width="17" height="16" fill="#4d5f5c"/><rect x="1220.500" y="811.500" width="17" height="16" fill="#37746c"/><rect x="1220.500" y="827.500" width="17" height="16" fill="#5a7d78"/><rect x="1220.500" y="844.500" width="17" height="16" fill="#3f8c7c"/><rect x="1220.500" y="861.500" width="17" height="16" fill="#479070"/><rect x="1220.500" y="878.500" width="17" height="16" fill="#35acbe"/><rect x="1220.500" y="894.500" width="17" height="16" fill="#40868f"/>
</g>
<path d="M1225 925h7l-3.500 3z" fill="#555"/>
<path d="M1226 943v11M1232 943v11l-5-5.500z" fill="#000" stroke="#000" stroke-width="1.300"/>
<rect x="1217" y="963" width="22" height="44" fill="#f2f2f2"/>

<!-- toolbox -->
<g>
<path d="M21 137V151L25 147.500 28 153 30.500 152 27.500 146.500 32 146Z" fill="#eef0f8" stroke="#555a70"/>
<path d="M21 163q-2 8 3 16" fill="none" stroke="#555"/><circle cx="22" cy="170" r="2" fill="#fff" stroke="#555"/><path d="M25 169l7 3-6 4z" fill="#111"/>
<g fill="none" stroke="#222"><path d="M21 193v10h12" stroke-width="1.700"/><path d="M24 200v-6h9v8" stroke="#555" stroke-width="1.500"/><path d="M19 205l14-14" stroke-width="1"/></g>
<circle cx="23" cy="222" r="6.500" fill="#eceef5" stroke="#5a6074" stroke-width="1.100"/><path d="M28 227l5 5" stroke="#333" stroke-width="2"/>
<path d="M19 245l5 5M24 245l-5 5M22 250l3 6 3-4 3 5 3-2" fill="none" stroke="#4e5468" stroke-width="1.200"/>
<path d="M19 272l4-4 5 5-4 4z" fill="#eee" stroke="#444"/><path d="M25 276h7v8h-7z" fill="#bbb" stroke="#444"/><path d="M22 276v5h6" fill="none" stroke="#e07814" stroke-width="2"/>
<rect x="19.500" y="296" width="13" height="13" fill="#f4f5f8" stroke="#4e5468"/><path d="M20 303h12v6H20z" fill="#d5d8e2"/>
<rect x="13.500" y="316.500" width="23" height="23" rx="3" fill="#e2e2e2" stroke="#74767c" stroke-width="1.200"/><circle cx="25" cy="328" r="6.500" fill="#fbfbfd" stroke="#4e5468"/><path d="M19 329a6 6 0 0 0 12 0z" fill="#d5d8e2"/>
<path d="M21 348h9l4 6-4 6h-9l-4-6z" fill="#eceef4" stroke="#4e5468"/>
<circle cx="26" cy="376" r="5" fill="#e0e2ea" stroke="#4e5468"/><rect x="19" y="380" width="8" height="7" fill="#f5f5f5" stroke="#4e5468"/><rect x="26" y="378" width="7" height="8" fill="#eef" stroke="#4e5468"/>
<text x="18" y="413" style="font-size:18px;font-weight:bold;fill:#e8e8f0;stroke:#555a70;stroke-width:.8px">A</text>
<rect x="18.500" y="426.500" width="13" height="12" fill="#f2f2f6" stroke="#4e5468"/><path d="M19 430.500h13M19 434.500h13M23 427v12M27.500 427v12" stroke="#4e5468" stroke-width=".8"/>
<path d="M20 464l11-12" stroke="#333" stroke-width="2.400"/><path d="M18 461l5 5M28 450l5 5" stroke="#333" stroke-width="1.400"/>
<path d="M23 478l6 10" stroke="#555" stroke-width="1.400"/><rect x="20" y="474" width="5" height="5" fill="#e87d14" stroke="#555"/><rect x="26" y="486" width="5" height="5" fill="#e87d14" stroke="#555"/>
<rect x="18.500" y="503.500" width="6" height="6" fill="#f0f0f0" stroke="#555"/><rect x="22.500" y="507.500" width="8" height="7" fill="#f5c15e" stroke="#555"/><rect x="26" y="512" width="6.500" height="6" fill="#f05a00"/>
<path d="M23 536l7-9 3 3-8 8z" fill="#9db5b0" stroke="#556"/><path d="M29 527l3-3 2 2-3 3z" fill="#222" stroke="#222"/><g fill="#e87d14"><rect x="17" y="534" width="8" height="8"/></g><rect x="20" y="537" width="3" height="3" fill="#fbd09c"/>
<path d="M22 562l4-9 4 9-2 4h-4z" fill="#f2f3f6" stroke="#4e5468"/><path d="M26 555v7" stroke="#4e5468"/><rect x="21" y="567" width="10" height="1.500" fill="#4e5468"/>
<path d="M25 580l8 8-8 8-8-8z" fill="#fff" stroke="#4e5468" stroke-width="1.300"/><path d="M18.500 588.500h13l-6.500 6.500z" fill="#e88a1e"/><path d="M30 583q4 0 4 6" fill="none" stroke="#e88a1e"/>
<path d="M19 610l5-5 5 5-5 5z" fill="#e0e0e6" stroke="#4e5468"/><path d="M22 622l5-7 5 7z" fill="#f4b24a"/><rect x="21" y="607" width="5" height="4" fill="#c44"/>
<g><use href="#ct" x="30" y="155"/><use href="#ct" x="30" y="181"/><use href="#ct" x="30" y="208"/><use href="#ct" x="30" y="236"/><use href="#ct" x="30" y="262"/><use href="#ct" x="30" y="287"/><use href="#ct" x="30" y="313"/><use href="#ct" x="30" y="338"/><use href="#ct" x="30" y="364"/><use href="#ct" x="30" y="390"/><use href="#ct" x="30" y="466"/><use href="#ct" x="30" y="492"/><use href="#ct" x="30" y="519"/><use href="#ct" x="30" y="545"/><use href="#ct" x="30" y="570"/><use href="#ct" x="30" y="598"/><use href="#ct" x="30" y="624"/></g>
</g>
</svg>

<!-- dialog -->
<div class="a" style="left:689px;top:514px;width:377px;height:305px;box-sizing:border-box;border:1px solid #2a2e36;border-radius:7px;background:rgba(190,222,244,.72);backdrop-filter:blur(5px);box-shadow:0 0 14px 2px rgba(0,0,0,.62),inset 0 0 0 1px rgba(255,255,255,.6)"></div>
<div class="a" style="left:695px;top:544px;width:365px;height:269px;box-sizing:border-box;border:1px solid #5c6e7e;background:#f0f0f0;box-shadow:0 0 0 1px rgba(255,255,255,.6)"></div>
<div class="a" style="left:1013px;top:515px;width:47px;height:19px;box-sizing:border-box;border:1px solid #7a3a36;border-top:0;border-radius:0 0 4px 4px;background:linear-gradient(#e8a49c,#c8584e 55%,#b43a30)"></div>
<svg class="l" viewBox="0 0 1247 1018" xmlns="http://www.w3.org/2000/svg">
<defs><linearGradient id="gd" x1="0" y1="0" x2="0" y2="1"><stop offset="0" stop-color="#f4f4f4"/><stop offset=".5" stop-color="#e4e4e4"/><stop offset="1" stop-color="#c9c9c9"/></linearGradient></defs>
<path d="M1032 520l10 8m0-8l-10 8" stroke="#6a2a26" stroke-width="4.500"/><path d="M1032 520l10 8m0-8l-10 8" stroke="#fff" stroke-width="2.600"/>
<text x="697" y="533" textLength="234" lengthAdjust="spacingAndGlyphs" style="font-size:12.500px">Преобразовать в растровое изображение</text>
<text x="713" y="566" textLength="65" lengthAdjust="spacingAndGlyphs">Разрешение:</text>
<rect x="819.500" y="553.500" width="79" height="20" fill="#fff" stroke="#e2e2e2"/>
<rect x="825" y="557" width="13" height="13" fill="#3399ff"/>
<text x="825" y="568" textLength="13" lengthAdjust="spacingAndGlyphs" style="fill:#fff">72</text>
<path d="M887 562h7l-3.500 4z" fill="#000"/>
<text x="904" y="570" textLength="23" lengthAdjust="spacingAndGlyphs">то...</text>
<rect x="714.500" y="588.500" width="326" height="83" rx="3" fill="none" stroke="#d5dfe5"/>
<rect x="720" y="582" width="30" height="12" fill="#f0f0f0"/>
<text x="722" y="592" textLength="26" lengthAdjust="spacingAndGlyphs">Цвет</text>
<text x="722" y="611" textLength="89" lengthAdjust="spacingAndGlyphs">Цветовой режим:</text>
<rect x="832.500" y="599.500" width="199" height="19" rx="3" fill="url(#gd)" stroke="#7e7e7e"/>
<text x="835" y="613" textLength="64" lengthAdjust="spacingAndGlyphs">RGB (24 бит)</text>
<path d="M1020 607h7l-3.500 4z" fill="#000"/>
<rect x="734.500" y="627.500" width="12" height="13" fill="#f3f3f3" stroke="#bbb"/>
<text class="dg" x="749" y="638" textLength="83" lengthAdjust="spacingAndGlyphs">Со смешиванием</text>
<rect x="734.500" y="650.500" width="12" height="13" fill="#f3f3f3" stroke="#bbb"/>
<text class="dg" x="749" y="661" textLength="189" lengthAdjust="spacingAndGlyphs">Всегда печатать наложение черного</text>
<rect x="714.500" y="680.500" width="326" height="57" rx="3" fill="none" stroke="#d5dfe5"/>
<rect x="720" y="674" width="62" height="12" fill="#f0f0f0"/>
<text x="722" y="684" textLength="57" lengthAdjust="spacingAndGlyphs">Параметры</text>
<rect x="734.500" y="693.500" width="12" height="13" fill="#e4e8f2" stroke="#8e8f8f"/><path d="M737 699l3 4 4-8" fill="none" stroke="#4a5a9a" stroke-width="1.800"/>
<text x="749" y="704" textLength="68" lengthAdjust="spacingAndGlyphs">Сглаживание</text>
<rect x="734.500" y="716.500" width="12" height="13" fill="#e8e8e8" stroke="#8e8f8f"/>
<text x="749" y="727" textLength="85" lengthAdjust="spacingAndGlyphs">Прозрачный фон</text>
<text x="723" y="761" textLength="166" lengthAdjust="spacingAndGlyphs">Несжатый размер файла: 213 КБ</text>
<rect x="812.500" y="779.500" width="72" height="20.500" rx="3" fill="url(#gd)" stroke="#8a8a8a"/>
<rect x="893.500" y="779.500" width="72" height="20.500" rx="3" fill="url(#gd)" stroke="#8a8a8a"/>
<rect x="974.500" y="779.500" width="72" height="20.500" rx="3" fill="url(#gd)" stroke="#8a8a8a"/>
<text x="841" y="794" textLength="14" lengthAdjust="spacingAndGlyphs">ОК</text>
<text x="909" y="794" textLength="38" lengthAdjust="spacingAndGlyphs">Отмена</text>
<text x="989" y="794" textLength="42" lengthAdjust="spacingAndGlyphs">Справка</text>
</svg>
</body></html>
